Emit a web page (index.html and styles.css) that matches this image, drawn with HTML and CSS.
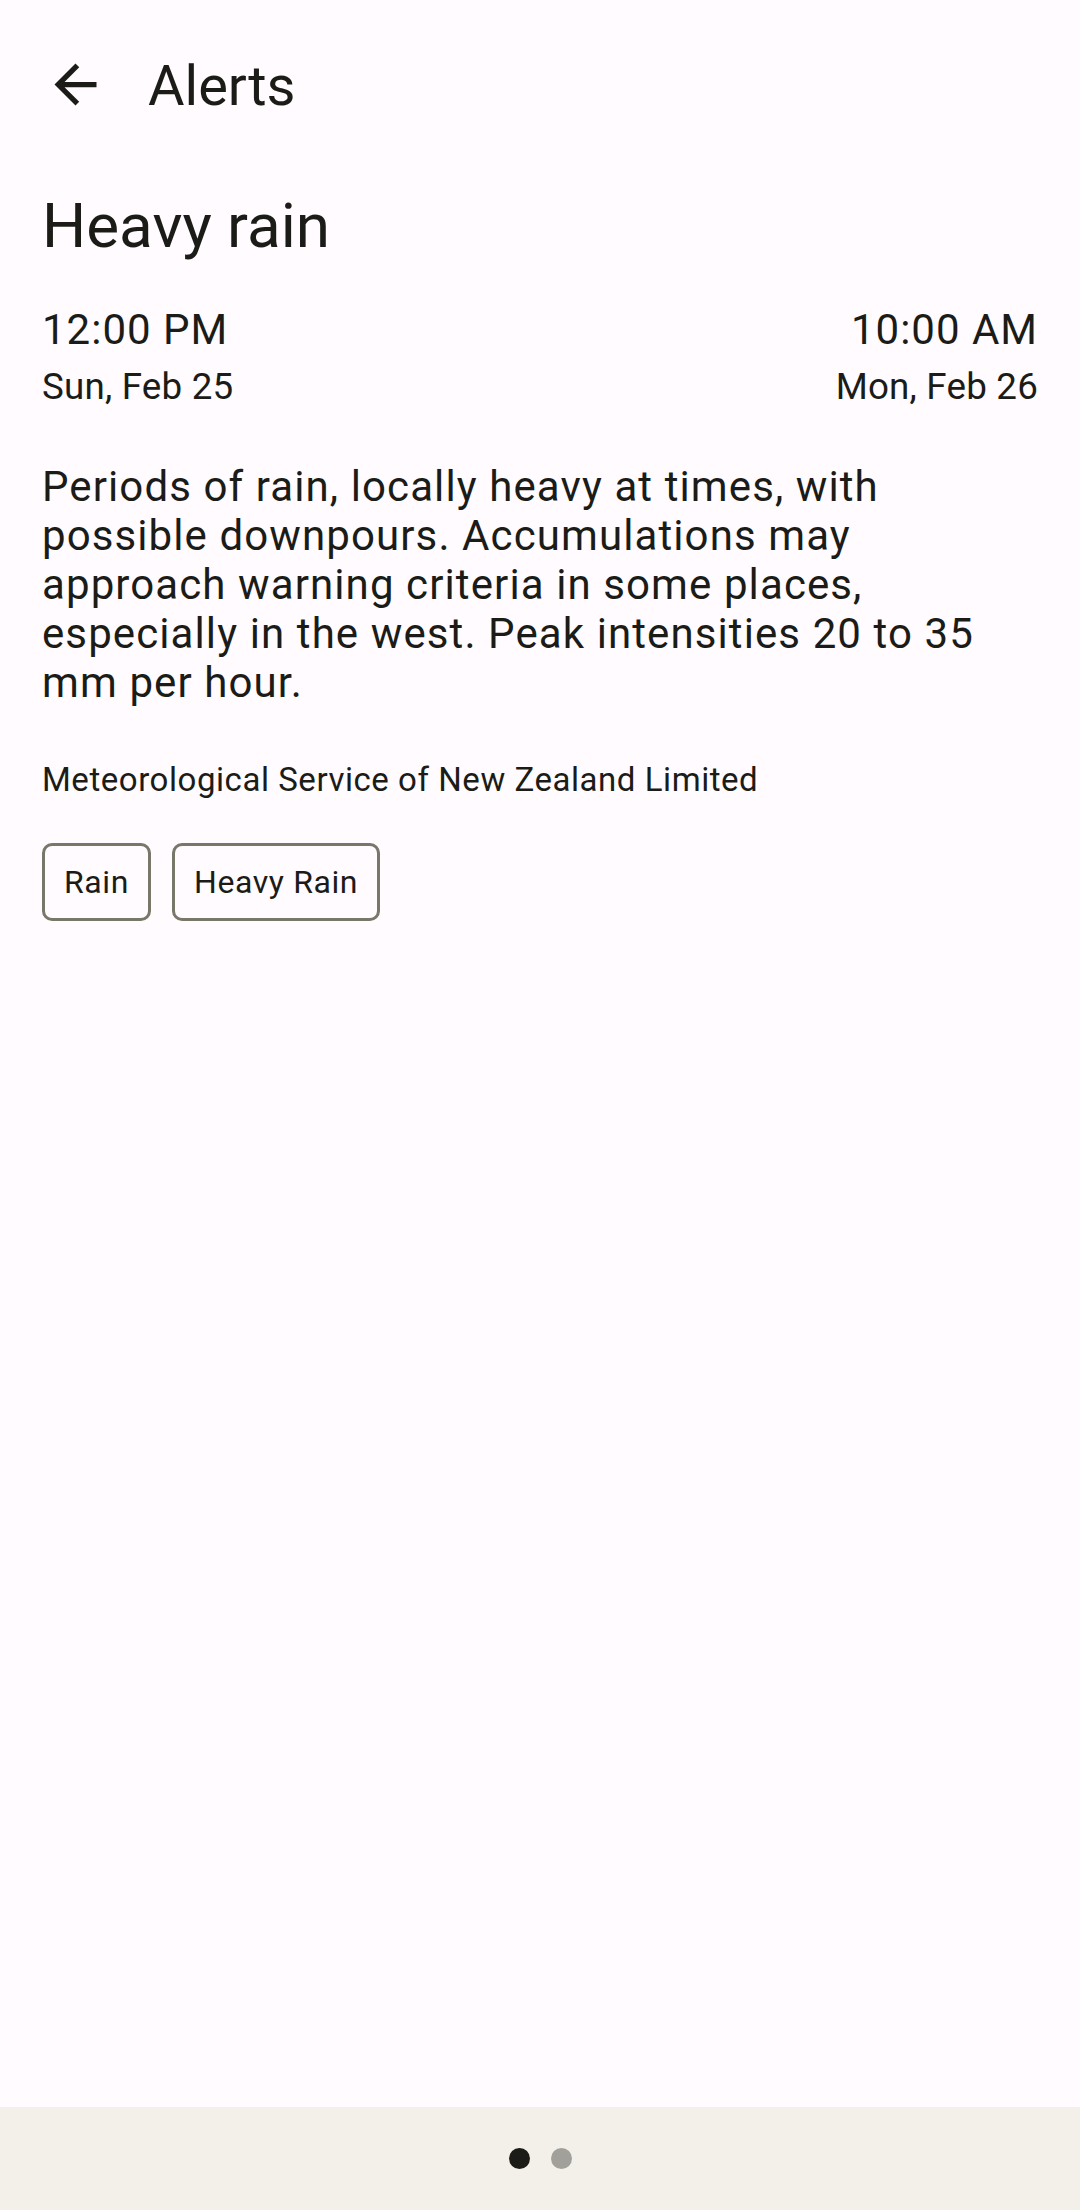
FILE: index.html
```html
<!DOCTYPE html>
<html lang="en">
<head>
<meta charset="utf-8">
<title>Alerts</title>
<link rel="stylesheet" href="styles.css">
</head>
<body>
<div class="screen">
  <header class="appbar">
    <button class="back" aria-label="Back">
      <svg viewBox="0 0 24 24" width="63" height="63"><path d="M20 11H7.83l5.59-5.59L12 4l-8 8 8 8 1.41-1.41L7.83 13H20v-2z" fill="#1b1c17"/></svg>
    </button>
    <h1 class="appbar-title">Alerts</h1>
  </header>
  <main class="content">
    <h2 class="alert-title">Heavy rain</h2>
    <div class="times">
      <div class="time-block">
        <div class="time">12:00 PM</div>
        <div class="date">Sun, Feb 25</div>
      </div>
      <div class="time-block end">
        <div class="time">10:00 AM</div>
        <div class="date">Mon, Feb 26</div>
      </div>
    </div>
    <p class="desc">Periods of rain, locally heavy at times, with possible downpours. Accumulations may approach warning criteria in some places, especially in the west. Peak intensities 20 to 35 mm per hour.</p>
    <p class="source">Meteorological Service of New Zealand Limited</p>
    <div class="chips">
      <span class="chip">Rain</span>
      <span class="chip">Heavy Rain</span>
    </div>
  </main>
  <footer class="pager">
    <span class="dot active"></span>
    <span class="dot"></span>
  </footer>
</div>
</body>
</html>
```
FILE: styles.css
```css
* { box-sizing: border-box; }
html, body {
  margin: 0;
  padding: 0;
  background: #fffbfe;
}
body {
  font-family: Roboto, "Noto Sans", sans-serif;
  color: #1b1c17;
}
.screen {
  width: 1080px;
  height: 2210px;
  display: flex;
  flex-direction: column;
}
.appbar {
  height: 168px;
  display: flex;
  align-items: center;
  flex-shrink: 0;
}
.back {
  width: 63px;
  height: 63px;
  margin-left: 44px;
  padding: 0;
  border: 0;
  background: none;
  display: flex;
}
.appbar-title {
  margin: 4px 0 0 41px;
  font-size: 56px;
  font-weight: 400;
  line-height: 68px;
}
.content {
  flex: 1;
  padding: 0 42px;
}
.alert-title {
  margin: 21px 0 0;
  font-size: 62px;
  font-weight: 400;
  line-height: 74px;
}
.times {
  display: flex;
  justify-content: space-between;
  margin-top: 42px;
}
.time-block.end { text-align: right; }
.time {
  font-size: 42px;
  line-height: 49px;
  letter-spacing: 1px;
}
.date {
  margin-top: 11px;
  font-size: 36.75px;
  line-height: 43px;
  letter-spacing: 0.2px;
}
.desc {
  margin: 54px 0 0;
  font-size: 42px;
  line-height: 49px;
  letter-spacing: 1.1px;
}
.source {
  margin: 53px 0 0;
  font-size: 33px;
  line-height: 40px;
  letter-spacing: 0.55px;
}
.chips {
  display: flex;
  gap: 21px;
  margin-top: 43px;
}
.chip {
  height: 78px;
  border: 3px solid #77776a;
  border-radius: 10px;
  padding: 0 19px;
  font-size: 32px;
  line-height: 72px;
  letter-spacing: 0.6px;
}
.pager {
  height: 103px;
  flex-shrink: 0;
  background: #f2f0e9;
  display: flex;
  align-items: center;
  justify-content: center;
  gap: 21px;
}
.dot {
  width: 21px;
  height: 21px;
  border-radius: 50%;
  background: #a2a09a;
}
.dot.active { background: #1b1c17; }
```
